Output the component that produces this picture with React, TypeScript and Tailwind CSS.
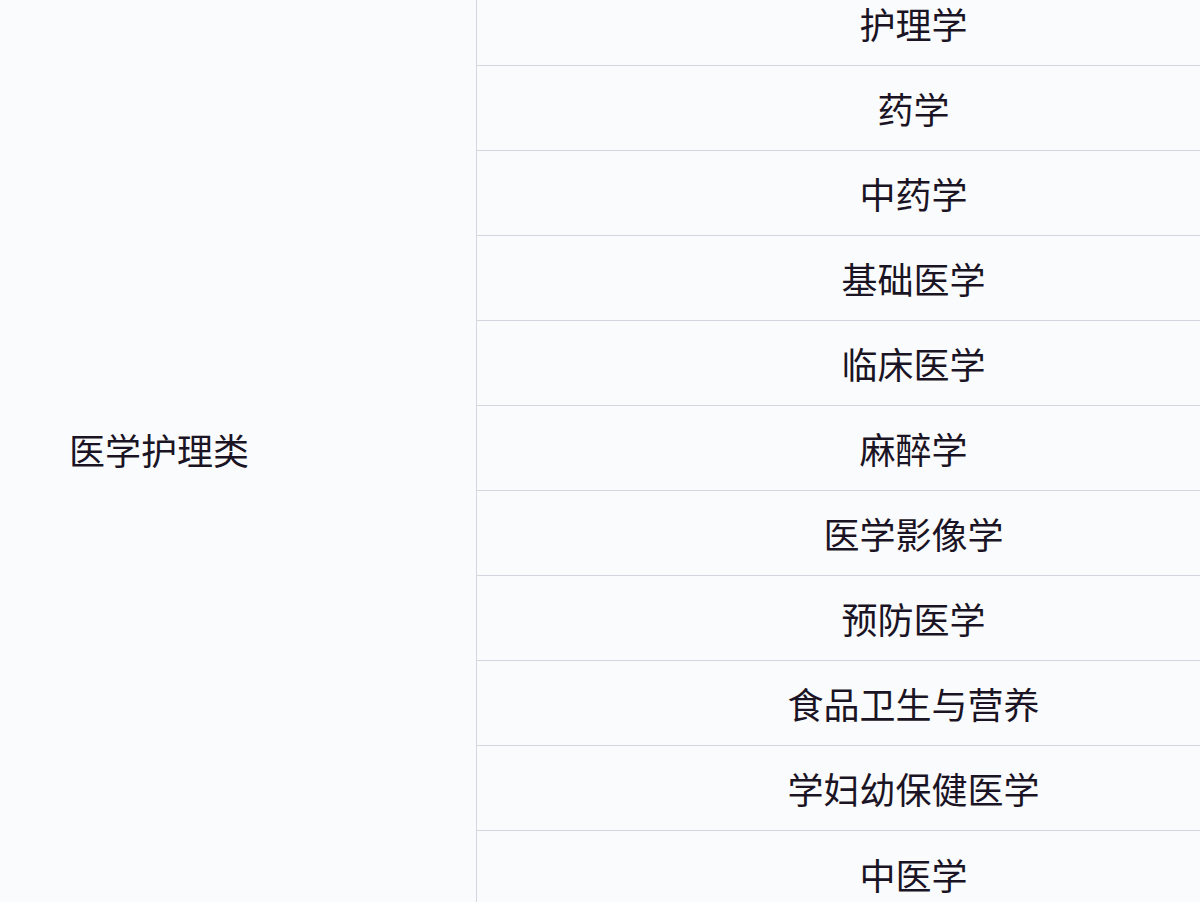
const majors = [
  "护理学",
  "药学",
  "中药学",
  "基础医学",
  "临床医学",
  "麻醉学",
  "医学影像学",
  "预防医学",
  "食品卫生与营养",
  "学妇幼保健医学",
  "中医学",
];

export default function App() {
  return (
    <div
      className="h-[902px] w-[1200px] overflow-hidden bg-[#fafbfd] text-[#1a1424]"
      style={{ fontFamily: '"Noto Sans CJK SC", "Noto Sans", sans-serif' }}
    >
      <div className="mt-[-19px] flex w-[1350px]">
        <div className="flex w-[477px] shrink-0 items-center border-r border-[#d3d6de] pl-[69px] text-[36px]">
          医学护理类
        </div>
        <div className="flex grow flex-col">
          {majors.map((name, i) => (
            <div
              key={name}
              className={
                i < majors.length - 1
                  ? "flex h-[85px] items-center justify-center border-b border-[#d3d6de] text-[36px]"
                  : "flex h-[85px] items-center justify-center text-[36px]"
              }
            >
              {name}
            </div>
          ))}
        </div>
      </div>
    </div>
  );
}
